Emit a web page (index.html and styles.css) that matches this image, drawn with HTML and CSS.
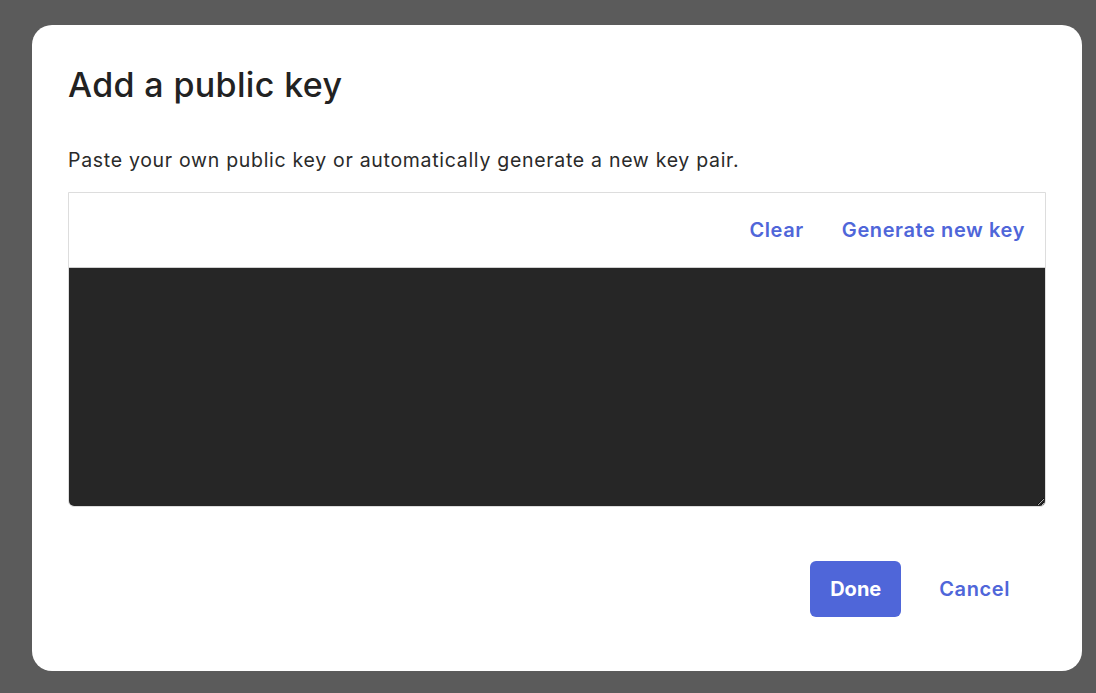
FILE: index.html
```html
<!DOCTYPE html>
<html>
<head>
<meta charset="utf-8">
<link rel="stylesheet" href="styles.css">
</head>
<body>
<div class="backdrop">
  <div class="dialog">
    <h1 class="title">Add a public key</h1>
    <p class="desc">Paste your own public key or automatically generate a new key pair.</p>
    <div class="keybox">
      <div class="keybar">
        <button class="link">Clear</button>
        <button class="link">Generate new key</button>
      </div>
      <textarea class="keyarea"></textarea>
    </div>
    <div class="actions">
      <button class="primary">Done</button>
      <button class="link cancel">Cancel</button>
    </div>
  </div>
</div>
</body>
</html>
```
FILE: styles.css
```css
html, body {
  margin: 0;
  padding: 0;
  width: 1096px;
  height: 693px;
  overflow: hidden;
  background: #5b5b5b;
  font-family: Inter, "Noto Sans", sans-serif;
}
.backdrop {
  padding: 25px 14px 0 32px;
}
.dialog {
  width: 1050px;
  height: 646px;
  box-sizing: border-box;
  background: #fff;
  border-radius: 20px;
  padding: 38px 36px 0 36px;
}
.title {
  margin: 0;
  font-size: 34px;
  font-weight: 500;
  color: #222;
  line-height: 44px;
  letter-spacing: 0.35px;
}
.desc {
  margin: 41px 0 0 0;
  font-size: 19.5px;
  color: #2a2a2a;
  line-height: 24px;
  letter-spacing: 0.7px;
}
.keybox {
  margin-top: 20px;
  border: 1px solid #dddddd;
  border-radius: 0 0 6px 6px;
  overflow: hidden;
  display: flex;
  flex-direction: column;
}
.keybar {
  height: 74px;
  display: flex;
  align-items: center;
  justify-content: flex-end;
  gap: 38px;
  padding-right: 20px;
  background: #fff;
  border-bottom: 1px solid #cfcfcf;
}
.link {
  background: none;
  border: none;
  padding: 0;
  font-family: Inter, "Noto Sans", sans-serif;
  font-size: 20px;
  font-weight: 600;
  letter-spacing: 0.6px;
  color: #4f66d9;
  cursor: pointer;
}
.keyarea {
  display: block;
  height: 238px;
  margin: 0;
  border: none;
  background: #262626;
  color: #eee;
  resize: vertical;
  outline: none;
  padding: 8px;
  box-sizing: border-box;
  width: 100%;
}
.actions {
  margin-top: 54px;
  display: flex;
  justify-content: flex-end;
  align-items: center;
  gap: 38px;
  padding-right: 36px;
}
.primary {
  width: 91px;
  height: 56px;
  background: #4f66d9;
  color: #fff;
  border: none;
  border-radius: 6px;
  font-family: Inter, "Noto Sans", sans-serif;
  font-size: 20px;
  font-weight: 700;
}
```
